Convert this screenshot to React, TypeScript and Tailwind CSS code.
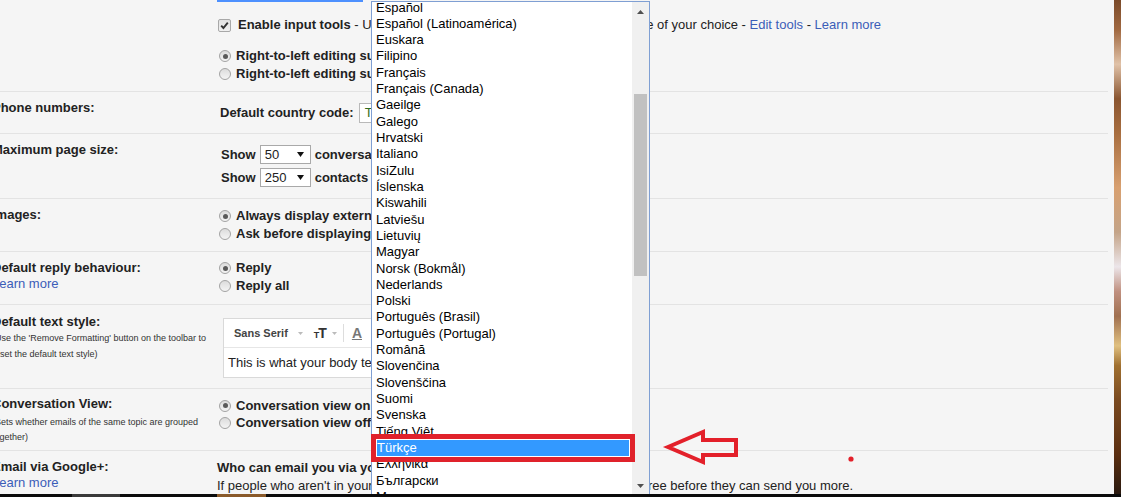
import React from "react";

const langs = [
  "Español",
  "Español (Latinoamérica)",
  "Euskara",
  "Filipino",
  "Français",
  "Français (Canada)",
  "Gaeilge",
  "Galego",
  "Hrvatski",
  "Italiano",
  "IsiZulu",
  "Íslenska",
  "Kiswahili",
  "Latviešu",
  "Lietuvių",
  "Magyar",
  "Norsk (Bokmål)",
  "Nederlands",
  "Polski",
  "Português (Brasil)",
  "Português (Portugal)",
  "Română",
  "Slovenčina",
  "Slovenščina",
  "Suomi",
  "Svenska",
  "Tiếng Việt",
  "Türkçe",
  "Ελληνικά",
  "Български",
  "Македонски",
];

function Radio({ on }: { on?: boolean }) {
  return (
    <span className="inline-flex w-[12px] h-[12px] shrink-0 items-center justify-center rounded-full border border-[#a3a3a3] bg-[linear-gradient(#dcdcdc,#f4f4f4)]">
      {on && <span className="block w-[5px] h-[5px] rounded-full bg-[#5a5a5a]" />}
    </span>
  );
}

function Check() {
  return (
    <span className="inline-flex w-[13px] h-[13px] shrink-0 items-center justify-center rounded-[2px] border border-[#a8a8a8] bg-[linear-gradient(#e2e2e2,#f0f0f0)]">
      <svg width="11" height="11" viewBox="0 0 11 11">
        <path d="M2.2 5.6 L4.4 8 L8.8 2.6" fill="none" stroke="#333" strokeWidth="1.9" />
      </svg>
    </span>
  );
}

function RadioLine({ on, text, h }: { on?: boolean; text: string; h: string }) {
  return (
    <div className={`flex items-center gap-[5px] font-bold whitespace-nowrap ${h}`}>
      <Radio on={on} />
      <span>{text}</span>
    </div>
  );
}

function Tri({ color = "#111", w = 7, h = 4, up = false }: { color?: string; w?: number; h?: number; up?: boolean }) {
  return (
    <svg width={w} height={h} viewBox={`0 0 ${w} ${h}`} className="shrink-0">
      {up ? (
        <polygon points={`0,${h} ${w},${h} ${w / 2},0`} fill={color} />
      ) : (
        <polygon points={`0,0 ${w},0 ${w / 2},${h}`} fill={color} />
      )}
    </svg>
  );
}

function SelectBox({ value }: { value: string }) {
  return (
    <span className="inline-flex items-center justify-between w-[51px] h-[19px] border border-[#a9a9a9] bg-white pl-[4px] pr-[6px] font-normal">
      <span>{value}</span>
      <Tri w={7} h={5} />
    </span>
  );
}

const link = "text-[#3b5db8]";

export default function App() {
  return (
    <div className="relative w-[1121px] h-[497px] overflow-hidden bg-[#f5f5f5] font-['Liberation_Sans',Arial,sans-serif] text-[13px] text-[#222]">
      <div className="flex h-[494px]">
        <div className="w-[1114px] overflow-hidden">
          <div className="mr-[6px]">
            {/* Row 1 */}
            <div className="flex h-[92px] border-b border-[#e3e3e3]">
              <div className="w-[225px] ml-[-8px] shrink-0" />
              <div className="flex-1">
                <div className="h-[2px] w-[146px] bg-[#4d90fe]" />
                <div className="mt-[15px] ml-[1px] flex items-center gap-[7px] h-[16px] whitespace-nowrap">
                  <Check />
                  <span>
                    <span className="font-bold">Enable input tools</span>
                    {" - Use various text input tools to type in the language of your choice - "}
                    <span className={link}>Edit tools</span>
                    {" - "}
                    <span className={link}>Learn more</span>
                  </span>
                </div>
                <div className="mt-[14px] ml-[2px]">
                  <RadioLine on text="Right-to-left editing support off" h="h-[18px]" />
                  <RadioLine text="Right-to-left editing support on" h="h-[18px]" />
                </div>
              </div>
            </div>

            {/* Row 2 */}
            <div className="flex h-[42px] border-b border-[#e3e3e3]">
              <div className="w-[225px] ml-[-8px] shrink-0 pt-[8px] leading-[16px] font-bold whitespace-nowrap">
                Phone numbers:
              </div>
              <div className="flex-1 pt-[11px] ml-[3px]">
                <div className="flex items-center h-[20px] gap-[5px] whitespace-nowrap">
                  <span className="font-bold">Default country code:</span>
                  <span className="inline-flex items-center h-[20px] w-[150px] border border-[#b9b9b9] bg-white px-[5px] text-[#2f6b22]">
                    Turkey
                  </span>
                </div>
              </div>
            </div>

            {/* Row 3 */}
            <div className="flex h-[65px] border-b border-[#e3e3e3]">
              <div className="w-[225px] ml-[-8px] shrink-0 pt-[8px] leading-[16px] font-bold whitespace-nowrap">
                Maximum page size:
              </div>
              <div className="flex-1 pt-[11px] ml-[4px] font-bold whitespace-nowrap">
                <div className="flex items-center h-[19px] gap-[4px]">
                  <span>Show</span>
                  <SelectBox value="50" />
                  <span>conversations per page</span>
                </div>
                <div className="flex items-center h-[19px] gap-[4px] mt-[4px]">
                  <span>Show</span>
                  <SelectBox value="250" />
                  <span>contacts per page</span>
                </div>
              </div>
            </div>

            {/* Row 4 */}
            <div className="flex h-[53px] border-b border-[#e3e3e3]">
              <div className="w-[225px] ml-[-8px] shrink-0 pt-[8px] leading-[16px] font-bold whitespace-nowrap">
                Images:
              </div>
              <div className="flex-1 pt-[8px] ml-[2px]">
                <RadioLine on text="Always display external images" h="h-[18px]" />
                <RadioLine text="Ask before displaying external images" h="h-[18px]" />
              </div>
            </div>

            {/* Row 5 */}
            <div className="flex h-[53px] border-b border-[#e3e3e3]">
              <div className="w-[225px] ml-[-8px] shrink-0 pt-[8px] whitespace-nowrap">
                <div className="leading-[16px] font-bold">Default reply behaviour:</div>
                <div className={`leading-[15px] ${link}`}>Learn more</div>
              </div>
              <div className="flex-1 pt-[7px] ml-[2px]">
                <RadioLine on text="Reply" h="h-[18px]" />
                <RadioLine text="Reply all" h="h-[18px]" />
              </div>
            </div>

            {/* Row 6 */}
            <div className="flex h-[84px] border-b border-[#e3e3e3]">
              <div className="w-[225px] ml-[-8px] shrink-0 pt-[9px] whitespace-nowrap">
                <div className="leading-[16px] font-bold">Default text style:</div>
                <div className="text-[9px] leading-[16px] text-[#333]">
                  (Use the 'Remove Formatting' button on the toolbar to
                  <br />
                  reset the default text style)
                </div>
              </div>
              <div className="flex-1 pt-[13px] ml-[6px]">
                <div className="w-[400px] h-[60px] border border-[#d9d9d9] bg-white">
                  <div className="h-[29px] border-b border-[#e6e6e6] flex items-center pl-[10px] whitespace-nowrap">
                    <span className="text-[11px] font-bold text-[#444]">Sans Serif</span>
                    <span className="ml-[10px]">
                      <Tri color="#bbb" w={5} h={3} />
                    </span>
                    <span className="ml-[11px] flex items-end font-bold text-[#333] leading-none">
                      <span className="text-[9px]">T</span>
                      <span className="text-[14px] ml-[-1px]">T</span>
                    </span>
                    <span className="ml-[5px]">
                      <Tri color="#bbb" w={5} h={3} />
                    </span>
                    <span className="ml-[6px] w-[1px] h-[18px] bg-[#ddd]" />
                    <span className="ml-[8px] text-[14px] font-bold text-[#777] underline leading-none">A</span>
                  </div>
                  <div className="h-[29px] flex items-center pl-[4px] whitespace-nowrap">
                    This is what your body text will look like.
                  </div>
                </div>
              </div>
            </div>

            {/* Row 7 */}
            <div className="flex h-[62px] border-b border-[#e3e3e3]">
              <div className="w-[225px] ml-[-8px] shrink-0 pt-[7px] whitespace-nowrap">
                <div className="leading-[16px] font-bold">Conversation View:</div>
                <div className="mt-[3px] text-[9px] leading-[15px] text-[#333]">
                  (Sets whether emails of the same topic are grouped
                  <br />
                  together)
                </div>
              </div>
              <div className="flex-1 pt-[8px] ml-[2px]">
                <RadioLine on text="Conversation view on" h="h-[17px]" />
                <RadioLine text="Conversation view off" h="h-[17px]" />
              </div>
            </div>

            {/* Row 8 */}
            <div className="flex h-[60px]">
              <div className="w-[225px] ml-[-8px] shrink-0 pt-[8px] whitespace-nowrap">
                <div className="leading-[16px] font-bold">Email via Google+:</div>
                <div className={`leading-[15px] ${link}`}>Learn more</div>
              </div>
              <div className="flex-1 pt-[8px] whitespace-nowrap">
                <div className="h-[18px] leading-[18px] font-bold">Who can email you via your Google+ profile?</div>
                <div className="h-[18px] leading-[18px]">
                  If people who aren't in your circles on Google+ email you, they'll have to agree before they can send you more.
                </div>
              </div>
            </div>
          </div>
        </div>
        <div className="w-[7px] h-full bg-[linear-gradient(#7a4a2a_0%,#a06840_6%,#e0c2a8_13%,#8a5530_20%,#a86e40_27%,#d8a070_38%,#c4a488_47%,#ece6ea_54%,#c09080_59%,#a07050_64%,#e0c080_70%,#a07030_74%,#7a4a20_81%,#5a2e10_92%,#2a1a10_100%)]" />
      </div>

      {/* taskbar */}
      <div className="flex h-[3px] bg-[#0b0b0b]">
        <div className="ml-[72px] w-[48px] bg-[#3a3a3a]" />
        <div className="ml-[97px] w-[49px] bg-[#8a5a2a]" />
      </div>

      {/* dropdown popup */}
      <div className="absolute left-[371px] top-[1px] w-[279px] h-[493px] border border-b-0 border-[#7f9fd3] bg-white flex overflow-hidden">
        <div className="w-[260px] shrink-0">
          <div className="mt-[-2.46px]">
            {langs.map((l) =>
              l === "Türkçe" ? (
                <div key={l} className="h-[16.32px] leading-[16.32px] ml-[5px] mr-[3px] bg-[#3399ff] text-white whitespace-nowrap">
                  {l}
                </div>
              ) : (
                <div key={l} className="h-[16.32px] leading-[16.32px] pl-[4px] text-black whitespace-nowrap">
                  {l}
                </div>
              )
            )}
          </div>
        </div>
        <div className="w-[17px] shrink-0 bg-[#f0f0f0] flex flex-col items-center">
          <div className="h-[17px] w-full flex items-center justify-center pt-[3px]">
            <Tri color="#505050" w={7} h={4} up />
          </div>
          <div className="mt-[75px] w-[13px] h-[182px] bg-[#c1c1c1]" />
          <div className="mt-auto h-[17px] w-full flex items-center justify-center">
            <Tri color="#505050" w={7} h={4} />
          </div>
        </div>
      </div>

      {/* red annotation rectangle */}
      <div className="absolute left-[371px] top-[434px] w-[264px] h-[28px] border-[5px] border-[#e0222b]" />

      {/* red arrow */}
      <svg className="absolute left-0 top-0 pointer-events-none" width="1121" height="497">
        <polygon
          points="668,447 703,432 703,440 736,440 736,455 703,455 703,462"
          fill="none"
          stroke="#e3202a"
          strokeWidth="4"
          strokeLinejoin="miter"
        />
        <circle cx="851" cy="459" r="2.6" fill="#e3202a" />
      </svg>
    </div>
  );
}
